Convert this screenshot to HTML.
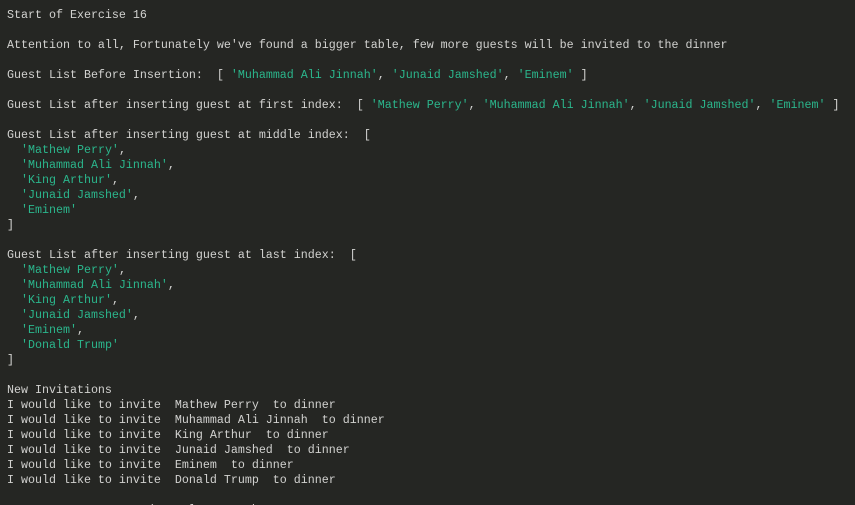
<!DOCTYPE html>
<html><head><style>
html,body{margin:0;padding:0;background:#252623;width:855px;height:505px;overflow:hidden}
pre{margin:0;padding:8px 0 0 7px;font-family:"Liberation Mono",monospace;font-size:11.67px;line-height:15px;color:#d2d2d0}
.g{color:#2bb68c}
</style></head><body><pre>Start of Exercise 16

Attention to all, Fortunately we've found a bigger table, few more guests will be invited to the dinner

Guest List Before Insertion:  [ <span class="g">'Muhammad Ali Jinnah'</span>, <span class="g">'Junaid Jamshed'</span>, <span class="g">'Eminem'</span> ]

Guest List after inserting guest at first index:  [ <span class="g">'Mathew Perry'</span>, <span class="g">'Muhammad Ali Jinnah'</span>, <span class="g">'Junaid Jamshed'</span>, <span class="g">'Eminem'</span> ]

Guest List after inserting guest at middle index:  [
  <span class="g">'Mathew Perry'</span>,
  <span class="g">'Muhammad Ali Jinnah'</span>,
  <span class="g">'King Arthur'</span>,
  <span class="g">'Junaid Jamshed'</span>,
  <span class="g">'Eminem'</span>
]

Guest List after inserting guest at last index:  [
  <span class="g">'Mathew Perry'</span>,
  <span class="g">'Muhammad Ali Jinnah'</span>,
  <span class="g">'King Arthur'</span>,
  <span class="g">'Junaid Jamshed'</span>,
  <span class="g">'Eminem'</span>,
  <span class="g">'Donald Trump'</span>
]

New Invitations
I would like to invite  Mathew Perry  to dinner
I would like to invite  Muhammad Ali Jinnah  to dinner
I would like to invite  King Arthur  to dinner
I would like to invite  Junaid Jamshed  to dinner
I would like to invite  Eminem  to dinner
I would like to invite  Donald Trump  to dinner

          I     t   d     l        b
</pre></body></html>
